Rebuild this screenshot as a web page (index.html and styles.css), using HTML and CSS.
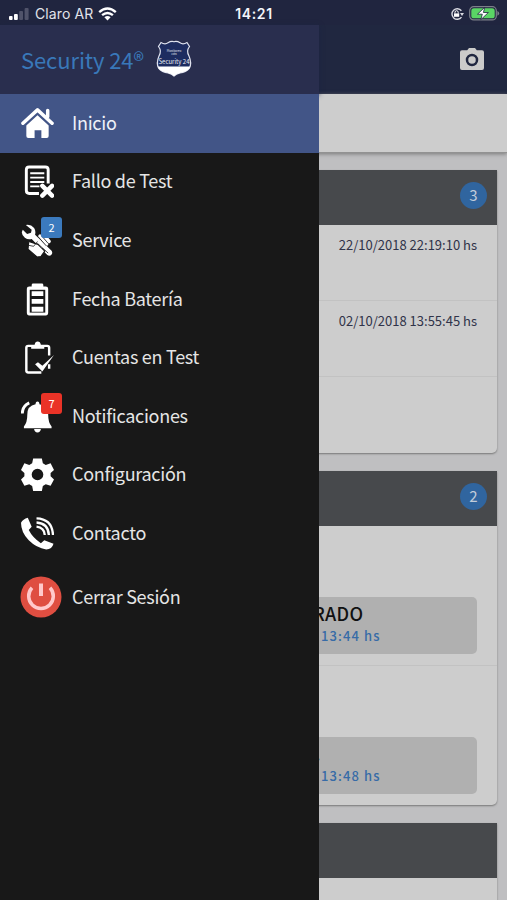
FILE: index.html
```html
<!DOCTYPE html>
<html lang="es">
<head>
<meta charset="utf-8">
<meta name="viewport" content="width=device-width, initial-scale=1">
<title>Security 24</title>
<link rel="stylesheet" href="styles.css">
</head>
<body>
<div class="app">
  <header class="status">
    <div class="carrier">
      <svg width="22" height="14" viewBox="0 0 22 14"><rect x="1" y="9" width="3.6" height="4" rx="1" fill="#fff"/><rect x="6" y="7" width="3.8" height="6" rx="1" fill="#fff"/><rect x="11.2" y="4" width="3.8" height="9" rx="1" fill="#50536a"/><rect x="16.6" y="1" width="4" height="12" rx="1" fill="#50536a"/></svg>
      <span class="carrier-name">Claro AR</span>
      <svg width="19" height="14" viewBox="0 0 19 14" fill="none" stroke="#fff" stroke-width="2.4"><path d="M1.2 5.2Q9.5-2 17.8 5.2"/><path d="M4.1 8.2Q9.5 3.6 14.9 8.2"/><path d="M6.4 10.3Q9.5 7.7 12.6 10.3L9.5 13.5Z" fill="#fff" stroke="none"/></svg>
    </div>
    <time class="clock">14:21</time>
    <div class="power">
      <svg width="14" height="14" viewBox="0 0 14 14"><path d="M11.4 3.7A5.3 5.3 0 1 0 11.5 10.2" fill="none" stroke="#d8d9e0" stroke-width="1.4"/><path d="M10 6h4l-2 3z" fill="#d8d9e0"/><path d="M4 6.4h5.2v3.4H4z" fill="#fff"/><path d="M5 6.5V5.3a1.6 1.6 0 0 1 3.2 0v1.2" fill="none" stroke="#fff"/></svg>
      <svg width="31" height="15" viewBox="0 0 31 15"><rect x=".7" y=".7" width="26.6" height="13.2" rx="4" fill="none" stroke="#7c8089" stroke-width="1.2"/><rect x="2.3" y="2.3" width="23.4" height="10" rx="2.6" fill="#5ad565"/><path d="M28.4 5v4.7q1.8-.9 1.8-2.3T28.4 5z" fill="#7c8089"/><path d="M15.8 1.2 8.5 8.2h4.8l-1.500 5.500 7.600-7.200h-5z" fill="#fff" stroke="#20253f" stroke-width=".8"/></svg>
    </div>
  </header>

  <main class="page">
    <div class="toolbar">
      <svg width="26" height="24" viewBox="0 0 26 24"><path d="M3 3.200h5.200L10 1h6l1.800 2.200H23q2 0 2 2V21q0 2-2 2H3q-2 0-2-2V5.200q0-2 2-2z" fill="#cbcbca"/><circle cx="13" cy="13" r="5" fill="none" stroke="#202740" stroke-width="2.500"/></svg>
    </div>
    <div class="subbar"></div>
    <div class="cards">
      <section class="card">
        <div class="card-head"><span class="count">3</span></div>
        <div class="event">22/10/2018 22:19:10 hs</div>
        <div class="event">02/10/2018 13:55:45 hs</div>
        <div class="event"></div>
      </section>
      <section class="card">
        <div class="card-head"><span class="count">2</span></div>
        <div class="detail"><div class="box"><strong>RADO</strong><span>13:44 hs</span></div></div>
        <div class="detail"><div class="box"><strong class="dot">.</strong><span>13:48 hs</span></div></div>
      </section>
      <section class="card last">
        <div class="card-head"></div>
      </section>
    </div>
  </main>

  <aside class="drawer">
    <div class="brand">
      <span class="brand-name">Security 24®</span>
      <svg class="shield" width="38" height="38" viewBox="0 0 38 38"><path d="M6 2.500Q10 5 13 2.800Q16 .8 19 1.700Q22 .8 25 2.800Q28 5 32 2.500L34.500 6.500Q31 11 34 16Q37 23 34.500 28Q31 32 25 33Q21 34 19 36Q17 34 13 33Q7 32 3.500 28Q1 23 4 16Q7 11 3.500 6.500Z" fill="#1d2c60" stroke="#dfe2ee" stroke-width="1.200"/><path d="M2.700 26.500H35.300Q34 31 25 33Q21 34 19 36Q17 34 13 33Q4 31 2.700 26.500Z" fill="#fff"/><g font-family="Noto Sans CJK JP, sans-serif" fill="#e5e8f2" text-anchor="middle"><text x="19" y="11.500" font-size="3">Monitoreo</text><text x="19" y="14.500" font-size="2.500">24hs</text><text x="19" y="23.500" font-size="7" textLength="31" lengthAdjust="spacingAndGlyphs">Security 24</text></g></svg>
    </div>
    <nav class="menu">
      <a class="item active">
        <svg class="icon" viewBox="0 0 34 34"><path d="M5.500 19 17 8.500 28.500 19V30q0 2-2 2H21v-8h-7v8H7.500q-2 0-2-2z" fill="#fff"/><path d="M2 17.200 17 3.500 32 17.200M27.500 3.500V11" fill="none" stroke="#425587" stroke-width="5.500"/><path d="M2 16.700 17 3 32 16.700M27.500 3.500V10" fill="none" stroke="#fff" stroke-width="3.600" stroke-linecap="round" stroke-linejoin="round"/></svg>
        <span>Inicio</span></a>
      <a class="item">
        <svg class="icon" viewBox="0 0 34 34" fill="none" stroke="#fff"><path d="M18.500 29.300H8.500q-3 0-3-3V5q0-3 3-3H25q3 0 3 3V19" stroke-width="3"/><path d="M9.500 8.500H24M9.500 13H24M9.500 17.500H24M9.500 22H19" stroke-width="2"/><path d="m22 21.500 10 10M32 21.500l-10 10" stroke-width="4.600" stroke-linecap="round"/></svg>
        <span>Fallo de Test</span></a>
      <a class="item">
        <svg class="icon" viewBox="0 0 34 34"><path d="M5 1q5-1 8.500 3 2 3 1 7l17 16.500q1.500 2.500-.2 4.200t-4.200.3L11 15.500q-4 1-7-1.300T.8 8.500l1-2.500 4.500 4.300 4-1.300L11 6z" fill="#fff"/><path d="m8 18-.8 8 9.300 8 4-.5 4-5.500-7-7z" fill="#fff" stroke="#181818" stroke-width="1.200"/><path d="m16.500 16 6 7M19.500 12.500l7 8M23 11l6 7" stroke="#fff" stroke-width="3.500" stroke-linecap="round"/><path d="m18 13.500 8 9M21 12l7 8M8 22l5 1 4-5M17 20l11 10" fill="none" stroke="#181818" stroke-width=".8"/></svg>
        <span>Service</span><b class="badge blue">2</b></a>
      <a class="item">
        <svg class="icon" viewBox="0 0 34 34"><path d="M11 3.500V2q0-1.500 1.500-1.500h9q1.500 0 1.500 1.500v1.500h2.500Q28 3.500 28 6v24.500q0 3-2.500 3h-17Q6 33.500 6 30.500V6q0-2.500 2.500-2.500z" fill="#fff"/><path d="M9 7h16v23.500H9z" fill="#181818"/><path d="M11 8.500h12v5H11zM11 16.500h12v5H11zM11 24.500h12v5H11z" fill="#fff"/></svg>
        <span>Fecha Batería</span></a>
      <a class="item">
        <svg class="icon" viewBox="0 0 34 34"><path d="M21 32.500H7.500q-2 0-2-2V7q0-2 2-2H27q2 0 2 2V15M29 24v4.500" fill="none" stroke="#fff" stroke-width="2.500"/><path d="M10.500 8V4H14q.5-3.500 3.200-3.500T20.500 4H24v4z" fill="#fff"/><path d="m14.500 24 3-2 4.500 3.500L34 14.500 22 31.500z" fill="#fff"/></svg>
        <span>Cuentas en Test</span></a>
      <a class="item">
        <svg class="icon" viewBox="0 0 34 34"><path d="M17 1.500q2 0 2 3Q28 6 28 15q0 8.500 3.500 12.200V29H3v-1.800Q6.500 23.500 6.500 15 6.500 6 15 4.500q0-3 2-3zM13.500 30h7q-.5 3.500-3.500 3.500T13.500 30z" fill="#fff"/><path d="M1.300 14Q1.500 6 8.500 3" fill="none" stroke="#fff" stroke-width="3"/></svg>
        <span>Notificaciones</span><b class="badge red">7</b></a>
      <a class="item">
        <svg class="icon" viewBox="0 0 34 34"><path d="M12.500.500h9l1 5 3 1.700 5-1.800 3.500 7-3.500 3v3.500l3.500 3.200-3.500 6.500-5-1.500-3 1.800-1 5h-9l-1-5-3-1.800-5 1.500L0 22.100l3.500-3.200v-3.500L0 12.400l3.500-7 5 1.800 3-1.700zM17 11a6 6 0 1 0 0 12 6 6 0 0 0 0-12z" fill="#fff" fill-rule="evenodd"/></svg>
        <span>Configuración</span></a>
      <a class="item">
        <svg class="icon" viewBox="0 0 34 34"><path d="M7 .700 11 10 8 13.500Q12 21.500 20.500 27L24 24l9.500 3.500Q32 33 26 33.500 16 32 8 24T0 6Q2 2 7 .700z" fill="#fff"/><path d="M16 10q8 1 8.500 8.500M16 5.700Q28 6.500 28.700 18.500M16 1.500Q32 2 33 18.500" fill="none" stroke="#fff" stroke-width="2.400"/></svg>
        <span>Contacto</span></a>
      <a class="item logout">
        <svg class="icon-lg" viewBox="0 0 42 42"><circle cx="21" cy="21" r="20.500" fill="#df4e41"/><path d="M12 11.800a12.300 12.300 0 1 0 18 0" fill="none" stroke="#ffc9cb" stroke-width="3.500"/><path d="M21 7.500V20" stroke="#ffc9cb" stroke-width="4"/></svg>
        <span>Cerrar Sesión</span></a>
    </nav>
  </aside>
</div>
</body>
</html>
```
FILE: styles.css
```css
* { box-sizing: border-box; }
body { margin: 0; font-family: "Noto Sans CJK JP", sans-serif; background: #202740; }
svg { display: block; flex: none; }
.app { position: relative; width: 507px; height: 900px; overflow: hidden; }

.status {
  display: grid; grid-template-columns: 1fr auto 1fr; align-items: center;
  height: 25px; padding: 2px 7px 0 8px; background: #20253f; color: #f4f5fa;
  font-family: Inter, sans-serif; font-size: 13px;
}
.carrier { display: flex; align-items: center; gap: 5px; }
.carrier-name { font-size: 14px; letter-spacing: .1px; color: #e2e3ea; }
.clock { font-weight: 600; font-size: 14px; letter-spacing: .6px; }
.power { display: flex; align-items: center; justify-content: flex-end; gap: 5px; }

.page { height: 875px; background: #bfbfc1; }
.toolbar {
  display: flex; align-items: center; justify-content: flex-end;
  height: 69px; padding: 0 22px 2px 0; background: #202740;
}
.subbar { position: relative; height: 59px; background: #cdcdcd; border-bottom: 1px solid #929292; box-shadow: 0 1px 4px #777; }
.cards { display: flex; flex-direction: column; gap: 18px; padding: 17px 10px 0; }
.card { background: #cdcdcd; border-radius: 0 0 5px 5px; box-shadow: 0 1px 2px #777; height: 283px; }
.card + .card { height: 334px; }
.card.last { height: 90px; }
.card-head { display: flex; align-items: center; justify-content: flex-end; height: 55px; padding: 0 10px 4px; background: #47494c; }
.count {
  width: 27px; height: 27px; border-radius: 50%; background: #30659f; color: #c1ccda;
  font-size: 15px; line-height: 26px; text-align: center;
}
.event {
  height: 76px; padding: 10px 20px 0; border-bottom: 1px solid #c2c2c2;
  text-align: right; font-size: 13px; line-height: 20px; color: #303349;
}
.event:last-child { border: 0; }
.detail { height: 140px; padding: 71px 20px 0; border-bottom: 1px solid #c2c2c2; }
.detail + .detail { border: 0; }
.box {
  display: flex; flex-direction: column; height: 57px; margin-left: -20px;
  padding: 4px 0 0 303px; border-radius: 5px; background: #b0b0b0;
}
.box strong { font-size: 18px; font-weight: 500; line-height: 25px; letter-spacing: .3px; color: #111; }
.box .dot { padding-left: 2px; }
.box span { padding-left: 8px; font-size: 13px; font-weight: 500; line-height: 19px; letter-spacing: 1.100px; color: #376ba7; }

.drawer { position: absolute; top: 25px; left: 0; width: 319px; height: 875px; background: #181818; }
.brand {
  position: relative; display: flex; align-items: center; gap: 11px; height: 69px; padding: 0 0 2px 21px;
  background: #292e4e; box-shadow: 0 1px 5px #1c2544;
}
.brand-name { font-size: 22px; letter-spacing: -.1px; color: #3978b9; }
.item { position: relative; display: flex; align-items: center; height: 58.600px; padding-left: 21px; color: #e5e5e5; font-size: 18px; letter-spacing: -.280px; }
.item > span { margin-left: 18px; padding-bottom: 3px; line-height: 26px; }
.item.active { background: #425587; color: #eef1f8; }
.icon { width: 33px; height: 33px; }
.icon-lg { width: 42px; height: 42px; margin-left: -1px; }
.logout { height: 69px; }
.logout > span { margin-left: 10px; }
.badge {
  position: absolute; left: 41px; top: 6px; width: 21px; height: 21px; border-radius: 3px;
  color: #fff; font-size: 11px; font-weight: 400; line-height: 21px; text-align: center;
}
.blue { background: #3b7abe; }
.red { background: #ea3327; }
```
